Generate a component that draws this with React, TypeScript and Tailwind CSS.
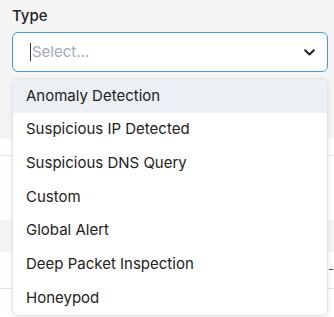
import React from 'react';

const options = [
  'Anomaly Detection',
  'Suspicious IP Detected',
  'Suspicious DNS Query',
  'Custom',
  'Global Alert',
  'Deep Packet Inspection',
  'Honeypod',
];

const App: React.FC = () => {
  return (
    <div
      className="relative w-[334px] h-[317px] overflow-hidden bg-white text-[#222]"
      style={{ fontFamily: 'Inter, "Noto Sans", sans-serif' }}
    >
      {/* form area */}
      <div className="h-[139px] bg-[#f5f5f5] pl-3 pr-[6px] pt-[6px]">
        <label className="block text-[15px] font-medium leading-[20px]">Type</label>
        <div className="mt-[6px] h-[40px] flex items-center rounded-[6px] border border-[#4b9ad6] bg-white pl-[17px] pr-[12px]">
          <span className="w-px h-[18px] bg-[#333]" />
          <span className="flex-1 pl-px text-[15px] text-[#a3acb9]">Select...</span>
          <svg width="11" height="7" viewBox="0 0 11 7" fill="none">
            <path d="M1.2 1.2L5.5 5.5L9.8 1.2" stroke="#222" strokeWidth="2" strokeLinecap="round" strokeLinejoin="round" />
          </svg>
        </div>
      </div>

      {/* table behind the menu */}
      <div className="h-[16px]" />
      <div className="h-[65px] border-t border-[#e6e6e6]" />
      <div className="h-[32px] bg-[#f4f4f4]" />
      <div className="h-[37px] border-b border-[#e6e6e6] flex items-center">
        <span className="ml-[328px] whitespace-nowrap text-[13px] text-[#444]">-1</span>
      </div>

      {/* open menu */}
      <div className="absolute left-3 top-[78px] w-[316px] overflow-hidden rounded-[6px] border border-[#e3e3e3] bg-white shadow-[0_2px_6px_rgba(0,0,0,0.08)]">
        {options.map((o, i) => (
          <div
            key={o}
            className={
              'h-[33.7px] flex items-center pl-[13px] text-[15px] ' +
              (i === 0 ? 'bg-[#ecf0f4]' : '')
            }
          >
            {o}
          </div>
        ))}
      </div>
    </div>
  );
};

export default App;
